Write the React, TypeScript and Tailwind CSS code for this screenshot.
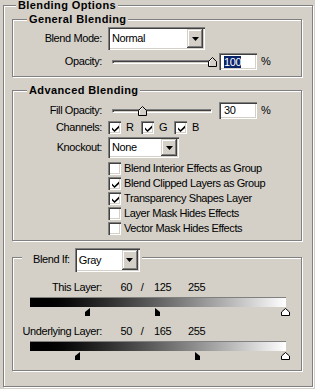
import React from 'react';

const etched = 'border border-[#808080] shadow-[inset_1px_1px_0_#ffffff,1px_1px_0_#ffffff]';
const sunken =
  'shadow-[inset_1px_1px_0_#808080,inset_2px_2px_0_#404040,inset_-1px_-1px_0_#ffffff,inset_-2px_-2px_0_#d4d0c8]';
const raised =
  'shadow-[inset_-1px_-1px_0_#404040,inset_1px_1px_0_#d4d0c8,inset_-2px_-2px_0_#808080,inset_2px_2px_0_#ffffff]';

const Label = ({ children }: { children: React.ReactNode }) => (
  <span className="w-[89px] shrink-0 text-right">{children}</span>
);

const Select = ({ value, className }: { value: string; className: string }) => (
  <div className={`flex items-stretch bg-white ${sunken} ${className}`}>
    <span className="flex-1 flex items-center pl-[4px]">{value}</span>
    <span className={`w-[16px] my-[2px] mr-[2px] bg-[#d4d0c8] flex items-center justify-center ${raised}`}>
      <svg width="7" height="4" viewBox="0 0 7 4">
        <path d="M0 0 H7 L3.5 4 Z" fill="#000" />
      </svg>
    </span>
  </div>
);

const Check = ({ on }: { on?: boolean }) => (
  <span className={`w-[13px] h-[13px] shrink-0 bg-white flex items-center justify-center ${sunken}`}>
    {on && (
      <svg width="7" height="7" viewBox="0 0 7 7" className="ml-[1px] mt-[1px]">
        <polygon points="0,2.5 2.5,5 7,0.5 7,3 2.5,7 0,4.5" fill="#000" />
      </svg>
    )}
  </span>
);

const Slider = ({ pos }: { pos: number }) => (
  <div className="relative w-[104px] h-[17px] ml-[10px] flex items-center">
    <div className="w-[100px] h-[4px] border border-t-[#808080] border-l-[#808080] border-b-white border-r-white shadow-[inset_1px_1px_0_#404040]" />
    <svg width="9" height="10" viewBox="0 0 9 10" className="absolute top-[4px]" style={{ left: pos - 4 }}>
      <path d="M4.5 0.5 L8.5 4.5 V9.5 H0.5 V4.5 Z" fill="#d4d0c8" stroke="#000" />
      <path d="M4.5 1.5 L1.5 4.5 V8.5" fill="none" stroke="#fff" />
    </svg>
  </div>
);

const NumBox = ({ value, selected }: { value: string; selected?: boolean }) => (
  <div className={`w-[38px] h-[17px] ml-[3px] bg-white flex items-center pl-[5px] ${sunken}`}>
    <span className={selected ? 'bg-[#0a246a] text-white leading-[12px]' : ''}>{value}</span>
  </div>
);

const Marker = ({ x, kind }: { x: number; kind: 'l' | 'r' | 'w' }) => {
  if (kind === 'w')
    return (
      <svg width="9" height="8" viewBox="0 0 9 8" className="absolute top-0" style={{ left: x - 4 }}>
        <path d="M4.5 0.5 L8.5 4 V7.5 H0.5 V4 Z" fill="#fff" stroke="#000" />
      </svg>
    );
  return (
    <svg width="5" height="8" viewBox="0 0 5 8" className="absolute top-0" style={{ left: kind === 'l' ? x - 5 : x }}>
      <path d={kind === 'l' ? 'M5 0 V8 H0 V4 Z' : 'M0 0 V8 H5 V4 Z'} fill="#000" />
    </svg>
  );
};

const Gradient = ({ lo, hi }: { lo: number; hi: number }) => (
  <>
    <div className="ml-[17px] w-[256px] h-[10px] mt-[3px] bg-linear-to-r from-black to-white border-t border-[#808080]" />
    <div className="relative ml-[17px] w-[256px] h-[8px] mt-[1px]">
      <Marker x={lo} kind="l" />
      <Marker x={hi} kind="r" />
      <Marker x={255} kind="w" />
    </div>
  </>
);

const ValueRow = ({ label, a, b }: { label: string; a: string; b: string }) => (
  <div className="flex items-center h-[13px]">
    <Label>{label}</Label>
    <span className="w-[30px] text-right">{a}</span>
    <span className="w-[20px] text-center">/</span>
    <span className="w-[34px] ml-[2px]">{b}</span>
    <span>255</span>
  </div>
);

const checks: [string, boolean][] = [
  ['Blend Interior Effects as Group', false],
  ['Blend Clipped Layers as Group', true],
  ['Transparency Shapes Layer', true],
  ['Layer Mask Hides Effects', false],
  ['Vector Mask Hides Effects', false],
];

const legendCls = 'px-[2px] font-bold leading-[11px] tracking-[0.4px] bg-[#d4d0c8]';

export default function App() {
  return (
    <div className="w-[315px] h-[389px] bg-[#d4d0c8] pl-[3px] font-['Tahoma','Liberation_Sans',Arial,sans-serif] text-[11px] leading-[13px] tracking-[-0.4px] text-black overflow-hidden">
      <fieldset className={`w-[310px] pb-[15px] ${etched}`}>
        <legend className={`ml-[12px] ${legendCls}`}>Blending Options</legend>

        <fieldset className={`ml-[8px] w-[290px] mt-[3px] pt-[2px] pb-[6px] ${etched}`}>
          <legend className={`ml-[14px] ${legendCls}`}>General Blending</legend>
          <div className="flex items-center h-[23px]">
            <Label>Blend Mode:</Label>
            <Select value="Normal" className="ml-[6px] w-[97px] h-[23px]" />
          </div>
          <div className="flex items-center h-[17px] mt-[3px]">
            <Label>Opacity:</Label>
            <Slider pos={100} />
            <NumBox value="100" selected />
            <span className="ml-[4px]">%</span>
          </div>
        </fieldset>

        <fieldset className={`ml-[8px] w-[290px] mt-[8px] pt-[6px] pb-[5px] ${etched}`}>
          <legend className={`ml-[14px] ${legendCls}`}>Advanced Blending</legend>
          <div className="flex items-center h-[17px]">
            <Label>Fill Opacity:</Label>
            <Slider pos={30} />
            <NumBox value="30" />
            <span className="ml-[4px]">%</span>
          </div>
          <div className="flex items-center h-[13px] mt-[2px]">
            <Label>Channels:</Label>
            <div className="ml-[6px] flex">
              {['R', 'G', 'B'].map((c) => (
                <span key={c} className="w-[33px] flex items-center">
                  <Check on />
                  <span className="ml-[5px]">{c}</span>
                </span>
              ))}
            </div>
          </div>
          <div className="flex items-center h-[21px] mt-[3px]">
            <Label>Knockout:</Label>
            <Select value="None" className="ml-[6px] w-[71px] h-[21px]" />
          </div>
          <div className="mt-[4px] pl-[95px] flex flex-col gap-[2px]">
            {checks.map(([t, on]) => (
              <div key={t} className="flex items-center h-[13px]">
                <Check on={on} />
                <span className="ml-[3px]">{t}</span>
              </div>
            ))}
          </div>
        </fieldset>

        <fieldset className={`ml-[8px] w-[290px] mt-[7px] pb-[10px] ${etched}`}>
          <legend className="ml-[9px] pl-[11px] pr-[2px] h-[19px] bg-[#d4d0c8] flex items-start">
            <span className="h-[22px] flex items-center">Blend If:</span>
            <Select value="Gray" className="ml-[5px] w-[65px] h-[24px] shrink-0" />
          </legend>
          <div className="mt-[14px]">
            <ValueRow label="This Layer:" a="60" b="125" />
          </div>
          <Gradient lo={60} hi={125} />
          <div className="mt-[9px]">
            <ValueRow label="Underlying Layer:" a="50" b="165" />
          </div>
          <Gradient lo={50} hi={165} />
        </fieldset>
      </fieldset>
    </div>
  );
}
